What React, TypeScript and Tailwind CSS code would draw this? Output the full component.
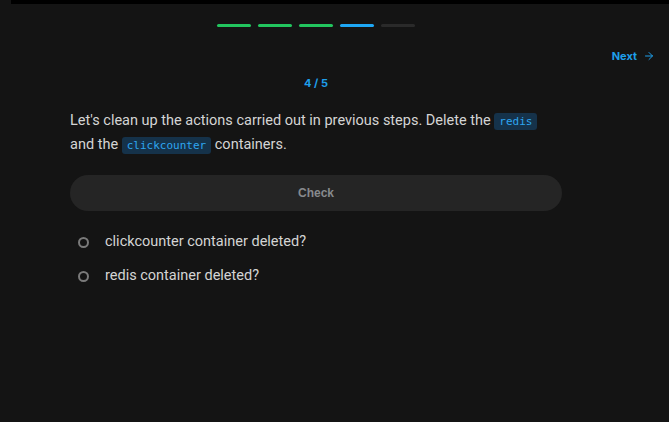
import { ArrowRight } from 'lucide-react'

const steps = ['done', 'done', 'done', 'current', 'todo'] as const

const checks = ['clickcounter container deleted?', 'redis container deleted?']

function Code({ children }: { children: string }) {
  return (
    <code className="rounded-[3px] bg-[#15324a] px-[5px] py-[2px] font-['DejaVu_Sans_Mono',monospace] text-[11px] text-[#2ea6f0]">
      {children}
    </code>
  )
}

export default function App() {
  return (
    <div className="relative h-[422px] w-[669px] overflow-hidden bg-[#141414] font-['Roboto',sans-serif]">
      {/* top strip */}
      <div className="ml-[11px] h-[4px] bg-black" />

      {/* progress */}
      <div className="mt-[20px] flex w-[632px] justify-center gap-[7px]">
        {steps.map((s, i) => (
          <div
            key={i}
            className={`h-[3px] w-[34px] rounded-full ${
              s === 'done' ? 'bg-[#22c55e]' : s === 'current' ? 'bg-[#1ea7f5]' : 'bg-[#2a2a2a]'
            }`}
          />
        ))}
      </div>

      {/* next */}
      <div className="mt-[21px] flex justify-end pr-[14px]">
        <button className="flex items-center gap-[6px] font-['Inter',sans-serif] text-[11px] font-bold text-[#1e9fea]">
          Next
          <ArrowRight className="h-[12px] w-[12px]" strokeWidth={2} />
        </button>
      </div>

      <div className="mt-[10px] w-[632px] text-center font-['Inter',sans-serif] text-[11px] font-bold text-[#1e9fea]">4 / 5</div>

      <div className="mx-[70px] mt-[18px] w-[492px]">
        <p className="text-[14.5px] leading-[23px] text-[#d4d4d4]">
          Let's clean up the actions carried out in previous steps. Delete the <Code>redis</Code>
          <br />
          and the <Code>clickcounter</Code> containers.
        </p>

        <button className="mt-[18px] flex h-[36px] w-full items-center justify-center rounded-full bg-[#252525] font-['Liberation_Sans',sans-serif] text-[12px] font-bold text-[#878a8d]">
          Check
        </button>

        <ul className="mt-[21px] flex flex-col gap-[14px]">
          {checks.map((c) => (
            <li key={c} className="flex h-[20px] items-center gap-[16px] pl-[8px] text-[14.5px] text-[#d4d4d4]">
              <span className="h-[11px] w-[11px] rounded-full border-2 border-[#7a7a7a]" />
              {c}
            </li>
          ))}
        </ul>
      </div>
    </div>
  )
}
